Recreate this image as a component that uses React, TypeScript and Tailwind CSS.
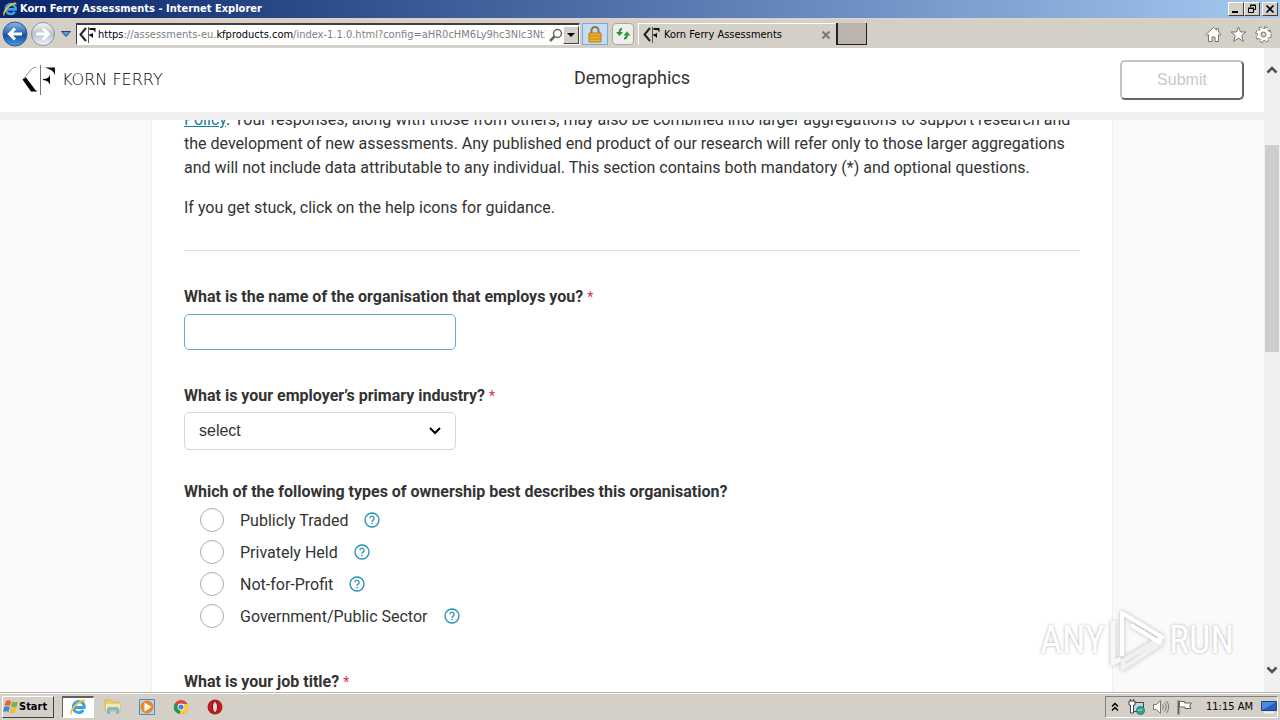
import React, { useState } from "react";

const ownershipTypes = [
  { id: "public", label: "Publicly Traded" },
  { id: "private", label: "Privately Held" },
  { id: "nonprofit", label: "Not-for-Profit" },
  { id: "government", label: "Government/Public Sector" },
];

const KfMark: React.FC<{ className?: string }> = ({ className }) => (
  <svg viewBox="0 0 34 30" className={className} aria-hidden="true">
    <path d="M1.500 14 10 3.500l4-1.500M13 26.500l2.500-.5" stroke="#888" fill="none" />
    <path d="M.5 14.500 4 12.500l10.500 14H9z" fill="#000" />
    <path d="M18.500 0v30" stroke="#777" strokeWidth="1" />
    <path d="M22 2.500h11V10.500C32 6 28 3.800 22 2.500z" fill="#111" />
    <path d="M21 14c4 0 6-1.500 7-4v10c-1-3-3-4.800-7-5z" fill="#000" />
  </svg>
);

// heavier cut of the mark for 16px use
const KfFavicon: React.FC = () => (
  <svg viewBox="0 0 17 16" className="h-4 w-[17px] shrink-0" aria-hidden="true">
    <path d="M7 1 1.500 7.500 7 14" fill="none" stroke="#222" strokeWidth="2" />
    <path d="M9.500 0v16" stroke="#555" />
    <path d="M10.500 1h6v4.500L14.500 3h-4z" fill="#111" />
    <path d="M10.500 7c2 0 3-.5 3.500-1.500v6c-.5-1.500-1.500-2.500-3.500-2.500z" fill="#111" />
  </svg>
);

const IeIcon: React.FC<{ className?: string }> = ({ className }) => (
  <svg viewBox="0 0 20 20" className={className} fill="none" aria-hidden="true">
    <path
      d="M16 13.500a6.200 6.200 0 1 1 1-3H6"
      stroke="#3aa3e6"
      strokeWidth="3.200"
    />
    <path
      d="M3 18.500C-.5 18 2 11 8 6S19 .5 18 5c-.5-1.500-4-1-8.500 2.500S2.500 15.500 3 18.500z"
      fill="#f2c230"
    />
  </svg>
);

const Required: React.FC = () => (
  <span className="text-[14px] font-normal text-[#d6324a]">*</span>
);

const HelpButton: React.FC<{ label: string }> = ({ label }) => (
  <button type="button" aria-label={`Help: ${label}`} className="ml-4">
    <svg viewBox="0 0 16 16" className="h-4 w-4" fill="none" stroke="#2491b3">
      <circle cx="8" cy="8" r="7" strokeWidth="1.300" />
      <path d="M5.900 6.300a2.100 2.100 0 1 1 3.200 1.800c-.8.500-1.100.8-1.100 1.600" strokeWidth="1.300" />
      <path d="M8 10.800v1.400" strokeWidth="1.400" />
    </svg>
  </button>
);

const TitleBar: React.FC = () => (
  <div className="flex h-[18px] shrink-0 items-center bg-linear-to-r from-[#0a246a] to-[#a6caf0] pr-0.5 pl-0.5">
    <IeIcon className="h-4 w-4" />
    <span className="ml-0.5 text-[11px] leading-4 font-bold text-white">
      Korn Ferry Assessments - Internet Explorer
    </span>
    <div className="ml-auto flex">
      {["Minimize", "Restore", "Close"].map((name) => (
        <button
          key={name}
          type="button"
          aria-label={name}
          className="flex h-3.5 w-4 items-center justify-center border border-t-white border-r-[#404040] border-b-[#404040] border-l-white bg-[#d4d0c8] last:ml-0.5"
        >
          <svg viewBox="0 0 10 10" className="h-2.5 w-2.5" fill="none" stroke="#000">
            {name === "Minimize" && <path d="M1 8h6" strokeWidth="2" />}
            {name === "Restore" && (
              <path d="M3.500 3V1.500h5v4H7M1.500 4.500h5v4h-5zM3 1h6M1 4h6" />
            )}
            {name === "Close" && <path d="m1.500 1.500 7 7m0-7-7 7" strokeWidth="1.600" />}
          </svg>
        </button>
      ))}
    </div>
  </div>
);

const Toolbar: React.FC = () => (
  <div className="flex h-[30px] shrink-0 items-center border-t-2 border-[#e0cfc4] bg-[#d4d0c8] text-[11px]">
    <button type="button" aria-label="Back" className="ml-0.5">
      <svg viewBox="0 0 26 26" className="h-[26px] w-[26px]">
        <defs>
          <linearGradient id="back" x2="0" y2="1">
            <stop offset="0" stopColor="#8db8e8" />
            <stop offset=".5" stopColor="#2764b4" />
            <stop offset=".55" stopColor="#174f9f" />
            <stop offset="1" stopColor="#42a0e6" />
          </linearGradient>
        </defs>
        <circle cx="13" cy="13" r="12" fill="url(#back)" stroke="#3a5685" />
        <path d="M20 13H8m5-5.500L7.500 13l5.500 5.500" stroke="#fff" strokeWidth="3" fill="none" />
      </svg>
    </button>
    <button type="button" aria-label="Forward" className="ml-0.5">
      <svg viewBox="0 0 26 26" className="h-[26px] w-[26px]">
        <defs>
          <linearGradient id="fwd" x2="0" y2="1">
            <stop offset="0" stopColor="#f4f7fa" />
            <stop offset=".5" stopColor="#b9c1ca" />
            <stop offset="1" stopColor="#f0f5fa" />
          </linearGradient>
        </defs>
        <circle cx="13" cy="13" r="11.500" fill="url(#fwd)" stroke="#8d949c" />
        <path d="M6 13h12m-5-5.500 5.500 5.500-5.500 5.500" stroke="#fff" strokeWidth="3" fill="none" />
      </svg>
    </button>
    <button type="button" aria-label="Recent pages" className="ml-1 w-3">
      <svg viewBox="0 0 12 8" className="h-2 w-3">
        <path d="M1.500 1.500h9L6 6.500z" fill="#4aa3dc" stroke="#164a80" />
      </svg>
    </button>
    <div className="ml-1 flex h-[22px] w-[504px] items-center border border-t-2 border-[#404040] border-r-white border-b-white bg-white pl-0.5">
      <KfFavicon />
      <div
        role="textbox"
        aria-label="Address"
        className="ml-0.5 w-[448px] overflow-hidden leading-4 whitespace-nowrap text-[#808080]"
      >
        <span className="text-black">https</span>://assessments-eu.
        <span className="text-black">kfproducts.com</span>
        /index-1.1.0.html?config=aHR0cHM6Ly9hc3Nlc3NtZV
      </div>
      <button type="button" aria-label="Search" className="ml-1">
        <svg viewBox="0 0 14 14" className="h-3.5 w-3.5" fill="none" stroke="#666">
          <circle cx="8.500" cy="5.500" r="4" strokeWidth="1.500" />
          <path d="m5.500 8.500-4.500 4.500" strokeWidth="2.500" />
        </svg>
      </button>
      <button
        type="button"
        aria-label="Show address bar list"
        className="ml-auto flex h-[18px] w-4 shrink-0 items-center justify-center border border-t-white border-r-[#404040] border-b-[#404040] border-l-white bg-[#d4d0c8]"
      >
        <svg viewBox="0 0 8 4" className="h-1 w-2">
          <path d="M0 0h8L4 4z" />
        </svg>
      </button>
    </div>
    <button
      type="button"
      aria-label="Security report"
      className="ml-0.5 flex h-[22px] w-[26px] items-center justify-center border border-[#7ba7dc] bg-[#c6dcf5]"
    >
      <svg viewBox="0 0 14 17" className="h-[17px] w-3.5">
        <path d="M3.500 8V4.500a3.500 3.500 0 0 1 7 0V8" fill="none" stroke="#8c7946" strokeWidth="2" />
        <path d="M1 7h12v9H1z" fill="#eeb22c" stroke="#b87a14" />
        <path d="M1.500 10h11m-11 3h11" stroke="#c8850d" />
      </svg>
    </button>
    <button
      type="button"
      aria-label="Refresh"
      className="ml-1 flex h-[22px] w-[22px] items-center justify-center rounded-sm border border-[#a9a9a4] bg-[#eeeeea]"
    >
      <svg viewBox="0 0 16 16" className="h-4 w-4" fill="none" stroke="#2e9438" strokeWidth="2">
        <path d="M7 3C5 3 4.500 4.500 4.500 7" />
        <path d="M9 12.500c2 0 3-1.500 3-4" />
        <path d="M1 6h7L4.500 10zM8.500 9.500h7L12 5.500z" fill="#2e9438" stroke="none" />
      </svg>
    </button>
    <div className="ml-1 flex h-[22px] w-[198px] items-center border-t border-l border-white pl-1">
      <KfFavicon />
      <span className="ml-1 leading-4">Korn Ferry Assessments</span>
      <button type="button" aria-label="Close tab" className="mr-1.5 ml-auto">
        <svg viewBox="0 0 8 8" className="h-2 w-2" stroke="#7d7972" strokeWidth="2">
          <path d="m.5.500 7 7m0-7-7 7" />
        </svg>
      </button>
    </div>
    <button
      type="button"
      aria-label="New tab"
      className="h-[22px] w-[31px] border-r border-b border-l-2 border-[#202020] bg-[#bbb4ad]"
    />
    <div className="mr-2 ml-auto flex gap-2">
      <button type="button" aria-label="Home">
        <svg viewBox="0 0 17 17" className="h-[17px] w-[17px]" fill="#fff" stroke="#77736e">
          <path d="M8.500 1.500 1 8.500l1.200 1.200 1.300-1V15.500h3.500v-4.500h3v4.500h3.500V8.700l1.300 1L16 8.500l-2.500-2.400V2.500h-2v1.700z" />
        </svg>
      </button>
      <button type="button" aria-label="Favorites">
        <svg viewBox="0 0 17 17" className="h-[17px] w-[17px]" fill="#fff" stroke="#77736e">
          <path d="m8.500 1 2.100 5H16l-4.300 3.500L13.300 15.500 8.500 12l-4.800 3.500 1.600-6L1 6h5.400z" />
        </svg>
      </button>
      <button type="button" aria-label="Tools">
        <svg viewBox="0 0 17 17" className="h-[17px] w-[17px]" fill="none">
          <circle cx="8.500" cy="8.500" r="6.500" stroke="#77736e" strokeWidth="3.500" strokeDasharray="3 2.100" />
          <circle cx="8.500" cy="8.500" r="6" stroke="#77736e" />
          <circle cx="8.500" cy="8.500" r="6.300" stroke="#fff" strokeWidth="2" strokeDasharray="2.500 2.600" />
          <circle cx="8.500" cy="8.500" r="4.300" stroke="#fff" strokeWidth="3" />
          <circle cx="8.500" cy="8.500" r="2.500" stroke="#77736e" />
        </svg>
      </button>
    </div>
  </div>
);

const PageHeader: React.FC = () => (
  <header className="grid h-[72px] shrink-0 grid-cols-3 items-center border-b-8 border-[#efefef] bg-white pr-5 pl-5">
    <div className="flex items-center">
      <KfMark className="h-[30px] w-[38px]" />
      <span className="ml-1 font-['DejaVu_Sans'] text-[16px] leading-6 font-extralight text-black">
        KORN FERRY
      </span>
    </div>
    <h1 className="pb-1 text-center text-[18px] leading-6 text-[#333]">Demographics</h1>
    <button
      type="button"
      disabled
      className="h-10 w-[124px] justify-self-end rounded-[5px] border-2 border-t-[#c4c4c4] border-r-[#666] border-b-[#666] border-l-[#c4c4c4] font-['Liberation_Sans'] text-[16px] text-[#c8c8c8]"
    >
      Submit
    </button>
  </header>
);

const DemographicsForm: React.FC = () => {
  const [ownership, setOwnership] = useState("");

  return (
    <form className="mx-auto -mt-3 max-w-[962px] border-x border-[#f0f0f0] bg-white px-8 text-[16px] leading-6 text-[#333]">
      <p>
        <a href="#policy" className="text-[#147d9c] underline">
          Policy
        </a>
        . Your responses, along with those from others, may also be combined
        into larger aggregations to support research and
        <br />
        the development of new assessments. Any published end product of our
        research will refer only to those larger aggregations
        <br />
        and will not include data attributable to any individual. This section
        contains both mandatory (*) and optional questions.
      </p>
      <p className="mt-4">If you get stuck, click on the help icons for guidance.</p>
      <hr className="mt-[30px] border-[#ddd]" />

      <div className="mt-[34px]">
        <label htmlFor="organisation" className="block font-bold">
          What is the name of the organisation that employs you? <Required />
        </label>
        <input
          id="organisation"
          type="text"
          className="mt-[5px] block h-9 w-[272px] rounded-[5px] border border-[#67a9cf] px-3.5 outline-none"
        />
      </div>

      <div className="mt-[34px]">
        <label htmlFor="industry" className="block font-bold">
          What is your employer’s primary industry? <Required />
        </label>
        <div className="relative mt-1 w-[272px]">
          <select
            id="industry"
            className="block h-[38px] w-full appearance-none rounded-[5px] border border-[#d5d5d5] bg-white px-3.5 font-['Liberation_Sans'] text-[16px]"
          >
            <option>select</option>
          </select>
          <svg
            viewBox="0 0 12 8"
            className="pointer-events-none absolute top-[15px] right-[15px] h-2 w-3"
            fill="none"
            stroke="#000"
            strokeWidth="2"
          >
            <path d="m1 1 5 5 5-5" />
          </svg>
        </div>
      </div>

      <fieldset className="mt-[30px]">
        <legend className="font-bold">
          Which of the following types of ownership best describes this
          organisation?
        </legend>
        {ownershipTypes.map(({ id, label }) => (
          <div key={id} className="flex h-8 items-center pl-4">
            <input
              type="radio"
              id={id}
              name="ownership"
              value={id}
              checked={ownership === id}
              onChange={() => setOwnership(id)}
              className="h-6 w-6 appearance-none rounded-full border border-[#aaa] bg-white checked:border-8 checked:border-[#147d9c]"
            />
            <label htmlFor={id} className="ml-4 pt-0.5">
              {label}
            </label>
            <HelpButton label={label} />
          </div>
        ))}
      </fieldset>

      <div className="mt-[38px]">
        <label htmlFor="job-title" className="block font-bold">
          What is your job title? <Required />
        </label>
        <input
          id="job-title"
          type="text"
          className="mt-[5px] block h-9 w-[272px] rounded-[5px] border border-[#d5d5d5] px-3.5"
        />
      </div>
    </form>
  );
};

const ScrollBar: React.FC = () => (
  <div className="flex w-4 shrink-0 flex-col items-center bg-[#f0f0f0] py-[18px]">
    <svg viewBox="0 0 12 8" className="h-2 w-3" fill="none" stroke="#505050" strokeWidth="2.500">
      <path d="m1.500 6.500 4.500-4.500 4.500 4.500" />
    </svg>
    <div className="mt-[71px] h-[207px] w-3.5 bg-[#cdcdcd]" />
    <svg viewBox="0 0 12 8" className="mt-auto h-2 w-3" fill="none" stroke="#505050" strokeWidth="2.500">
      <path d="m1.500 1.500 4.500 4.500 4.500-4.500" />
    </svg>
  </div>
);

const Watermark: React.FC = () => (
  <div className="pointer-events-none absolute right-[30px] bottom-5 flex items-center gap-0.5 font-['Roboto_Condensed','Liberation_Sans_Narrow','Roboto'] text-[38px] leading-none text-white [text-shadow:0_0_3px_#aaa]">
    <span>ANY</span>
    <svg viewBox="0 0 60 64" className="h-16 w-[60px] drop-shadow-[0_0_2px_#bbb]" fill="none" strokeWidth="5" strokeLinejoin="round">
      <path d="M6 13v42l8-4" stroke="#f7f7f7" />
      <path d="M56 34 16 60v-7l38-23" stroke="#f0f0f0" />
      <path d="M15 48V5l40 24-3 5-28-17" stroke="#fff" strokeWidth="4" />
    </svg>
    <span>RUN</span>
  </div>
);

const Taskbar: React.FC = () => (
  <footer className="flex h-7 shrink-0 items-center border-t border-[#b8b4ae] bg-[#d4d0c8] pr-0.5 pl-0.5 text-[11px] leading-4 shadow-[inset_0_1px_#fff]">
    <button
      type="button"
      className="flex h-[22px] w-[52px] items-center border border-t-white border-r-[#404040] border-b-[#404040] border-l-white font-bold"
    >
      <svg viewBox="0 0 16 16" className="h-4 w-4 shrink-0">
        <path d="M3 2c2-1 3-1 5 0L7 7C5 6 3.500 6 1.500 7z" fill="#e8622c" />
        <path d="M9 2.500c2 1 4 1 6 0L13.500 8c-2 1-3.500.5-5.500-.5z" fill="#78b83c" />
        <path d="M1.200 8c2-1 3.500-1 5.500 0l-1.200 5C4 12 2 12 0 13z" fill="#3d88d0" />
        <path d="M7.700 8.500c2 1 3.500 1.200 5.500.2L12 13.500c-2 1-4 1-5.500 0z" fill="#f2bd2e" />
      </svg>
      Start
    </button>
    <button
      type="button"
      aria-label="Internet Explorer"
      className="ml-2 flex h-[22px] w-8 items-center justify-center border border-t-2 border-[#606060] border-r-white border-b-white bg-white"
    >
      <IeIcon className="h-[18px] w-[18px]" />
    </button>
    <button type="button" aria-label="Explorer" className="ml-2.5">
      <svg viewBox="0 0 18 18" className="h-[18px] w-[18px]">
        <path d="M1 2h6l1.500 2H16v9H1z" fill="#ecd06a" stroke="#c9a741" strokeWidth=".5" />
        <path d="M2 6h14v6H2z" fill="#f8e9a6" />
        <path d="M3 16v-5q0-2 2-2h8q2 0 2 2v5h-3v-4H6v4z" fill="#79b9df" />
      </svg>
    </button>
    <button type="button" aria-label="Media Player" className="ml-4">
      <svg viewBox="0 0 18 18" className="h-[18px] w-[18px]">
        <path d="M1.500 1.500h15v15h-15z" fill="#b6d7ee" stroke="#4f88bd" />
        <circle cx="9" cy="9" r="6.500" fill="#ee8420" />
        <circle cx="9" cy="9" r="4.500" fill="#f08c22" />
        <path d="M6.500 4.500 13.500 9l-7 4.500z" fill="#fff" />
      </svg>
    </button>
    <button type="button" aria-label="Chrome" className="ml-4">
      <svg viewBox="0 0 18 18" className="h-4 w-[18px]">
        <circle cx="9" cy="9" r="8" fill="#dc4437" />
        <path d="M9 9 2 5a8 8 0 0 0 6 12l4-6z" fill="#239957" />
        <path d="M9 9h-1v8a8 8 0 0 0 8.300-11.500H9z" fill="#fcc934" />
        <circle cx="9" cy="9" r="3.800" fill="#fff" />
        <circle cx="9" cy="9" r="2.900" fill="#4285d4" />
      </svg>
    </button>
    <button type="button" aria-label="Opera" className="ml-4">
      <svg viewBox="0 0 18 18" className="h-[18px] w-[18px]">
        <circle cx="9" cy="9" r="7.500" fill="#bf1a20" />
        <ellipse cx="9" cy="9" rx="2.500" ry="5.500" fill="#e8dada" stroke="#7d1014" />
      </svg>
    </button>
    <div className="ml-auto flex h-[22px] items-center border border-t-[#808080] border-r-white border-b-white border-l-[#808080] pl-1">
      <button type="button" aria-label="Show hidden icons">
        <svg viewBox="0 0 10 10" className="h-2.5 w-2.5" fill="none" stroke="#000" strokeWidth="1.500">
          <path d="m2 4.500 3-3 3 3M2 8.500l3-3 3 3" />
        </svg>
      </button>
      <svg viewBox="0 0 18 18" className="ml-2 h-[18px] w-[18px]">
        <path d="M5.500 4.500h10v9h-10z" fill="#b8d8e6" stroke="#444" />
        <path d="M1 3h6v4H5.500v8H2.500V7H1zM2.500 1v2m3-2v2" fill="#fff" stroke="#444" />
        <circle cx="12.500" cy="12.500" r="4" fill="#3ba18d" stroke="#267a70" />
        <path d="M9.500 12c2 1 3-1 5 0" stroke="#b6e4d5" fill="none" />
      </svg>
      <svg viewBox="0 0 18 18" className="ml-1.5 h-[18px] w-[18px]" fill="none" stroke="#777">
        <path d="M1.500 6.500h3l4-4v13l-4-4h-3z" fill="#fff" />
        <path d="M10.500 6.500q2 2.500 0 5M12.500 4.500q3.500 4.500 0 9M14.500 3q4.500 6 0 12" />
      </svg>
      <svg viewBox="0 0 18 18" className="ml-1.5 h-[18px] w-[18px]" fill="#fff" stroke="#666">
        <path d="M2.500 2.500v14" strokeWidth="2" />
        <path d="M3.500 3.500h5v1.500h7l-2 3 1.500 2.500H9V9H3.500z" />
      </svg>
      <time className="ml-3">11:15 AM</time>
      <svg viewBox="0 0 16 14" className="ml-2 h-3.5 w-4">
        <path d="M.5 1.500h15v9H.5z" fill="#255fc5" stroke="#244277" />
        <path d="M1 2h14L8 6 1 10z" fill="#4d8be0" />
        <path d="M3 12.500h10" stroke="#eee" strokeWidth="2" />
      </svg>
    </div>
  </footer>
);

const App: React.FC = () => (
  <div className="flex h-screen flex-col overflow-hidden font-['DejaVu_Sans_Condensed','DejaVu_Sans',sans-serif] text-black">
    <TitleBar />
    <Toolbar />
    <div className="flex min-h-0 flex-1 font-['Roboto',sans-serif]">
      <div className="relative flex min-w-0 flex-1 flex-col">
        <PageHeader />
        <main className="min-h-0 flex-1 overflow-hidden bg-[#fafafa]">
          <DemographicsForm />
        </main>
        <Watermark />
      </div>
      <ScrollBar />
    </div>
    <Taskbar />
  </div>
);

export default App;
